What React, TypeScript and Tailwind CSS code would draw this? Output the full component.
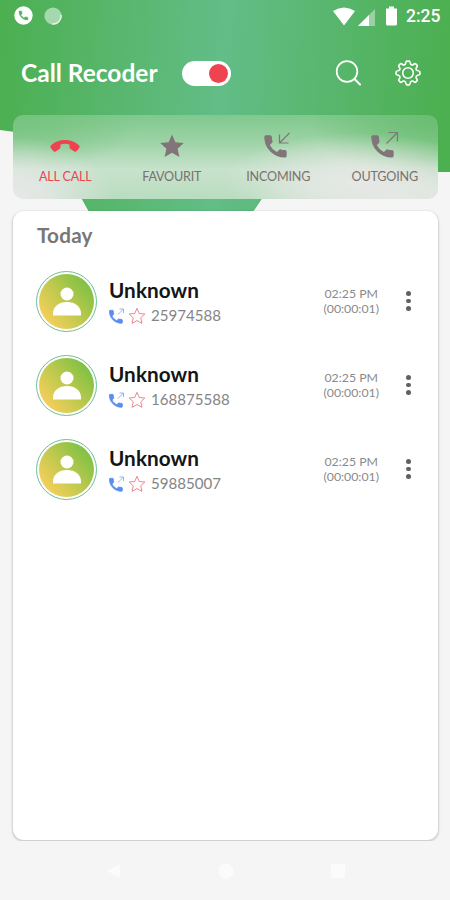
import type { ReactNode } from "react";

const HANDSET =
  "M6.62 10.79c1.44 2.83 3.76 5.14 6.59 6.59l2.2-2.2c.27-.27.67-.36 1.02-.24 1.12.37 2.33.57 3.57.57.55 0 1 .45 1 1V20c0 .55-.45 1-1 1C10.61 21 3 13.39 3 4c0-.55.45-1 1-1h3.5c.55 0 1 .45 1 1 0 1.25.2 2.45.57 3.57.11.35.03.74-.25 1.02l-2.2 2.2z";
const STAR =
  "M12 0.5l3.400 7.700 8.400 .8-6.200 5.700 1.800 8.300-7.400-4.200-7.400 4.200 1.800-8.300-6.200-5.700 8.400-.8z";

function Backdrop() {
  return (
    <svg className="absolute left-0 top-0 -z-10 h-[215px] w-[450px]" viewBox="0 0 450 215">
      <defs>
        <linearGradient id="sky" gradientUnits="userSpaceOnUse" x1="-5" y1="90" x2="445" y2="120">
          <stop offset="0" stopColor="#4caf50" />
          <stop offset="0.5" stopColor="#62bd87" />
          <stop offset="1" stopColor="#4caf50" />
        </linearGradient>
      </defs>
      <path d="M0 0H450V172H284Q276 176 270 187L253 212H89L68 174Q52 138 30 134L0 130Z" fill="url(#sky)" />
    </svg>
  );
}

function StatusBar() {
  return (
    <div className="flex h-8 items-center pl-3.5 pr-[9px] text-white">
      <svg className="mt-[-1px] size-[19px]" viewBox="0 0 19 19">
        <circle cx="9.5" cy="9.5" r="9.2" fill="#fff" />
        <path d={HANDSET} fill="#4fb05a" stroke="#4fb05a" transform="translate(3.6 3.6) scale(.49)" />
      </svg>
      <svg className="ml-[11px] mt-[-1px] size-[18px]" viewBox="0 0 18 18">
        <circle cx="9" cy="9" r="8.6" fill="#a6d8ad" />
        <path d="M17 8A8 8 0 0 1 8 17" fill="none" stroke="#e6f5e8" strokeWidth="1.5" />
      </svg>
      <svg className="ml-auto h-[19px] w-[43px]" viewBox="0 0 43 19">
        <path d="M0 4Q11-3 22 4L11 18.5Z" fill="#fff" />
        <path d="M25 19L42 2V19Z" fill="#fff" fillOpacity=".4" />
        <path d="M25 19L36 8V19Z" fill="#fff" />
      </svg>
      <svg className="ml-[10px] h-5 w-[11px]" viewBox="0 0 11 20">
        <path d="M3 0.5h5v2h3V18q0 1.5-1.5 1.5h-8Q0 19.500 0 18V2.500h3z" fill="#fff" />
      </svg>
      <span className="ml-[9px] mt-0.5 w-[35px] whitespace-nowrap font-[Roboto,sans-serif] text-[17.500px] font-medium leading-none">2:25</span>
    </div>
  );
}

function Header() {
  return (
    <header className="mt-[23px] flex h-9 items-center pl-[21px] pr-[29px] text-white">
      <h1 className="w-[161px] whitespace-nowrap text-[24.500px] font-bold leading-9">Call Recoder</h1>
      <div className="flex h-[25px] w-[49px] items-center justify-end rounded-full bg-white pr-[3px]">
        <span className="size-[19px] rounded-full bg-[#ef4350]" />
      </div>
      <svg className="ml-auto size-[26px]" viewBox="0 0 26 26" fill="none" stroke="#fff" strokeWidth="1.700" strokeLinecap="round">
        <circle cx="12" cy="11.500" r="10.300" />
        <path d="M19.500 19l5.500 5.500" strokeWidth="2" />
      </svg>
      <svg className="ml-[34px] size-[26px]" viewBox="0 0 24 24" fill="none" stroke="#fff" strokeWidth="1.500" strokeLinejoin="round">
        <circle cx="12" cy="12" r="4.900" />
        <path d="M9.700 3.500Q10.200 1 11 1h2q.8 0 1.300 2.500Q15 5 16.600 4.500q1.800-1.600 2.500-.9l1.300 1.300q.7.700-.9 2.500Q19 9 20.500 9.700 23 10.200 23 11v2q0 .8-2.500 1.300-1.500.7-1 2.300 1.600 1.800.9 2.500l-1.300 1.300q-.7.700-2.500-.9-1.600-.5-2.300 1Q13.800 23 13 23h-2q-.8 0-1.300-2.500-.7-1.500-2.300-1-1.800 1.600-2.500.9l-1.300-1.300q-.7-.7.900-2.500.5-1.600-1-2.300Q1 13.800 1 13v-2q0-.8 2.500-1.300Q5 9 4.500 7.400 2.900 5.600 3.600 4.900l1.300-1.300q.7-.7 2.500.9 1.600.5 2.300-1z" />
      </svg>
    </header>
  );
}

function CallArrow({ incoming }: { incoming?: boolean }) {
  return (
    <svg className="h-7 w-8" viewBox="0 0 32 28">
      <path d={HANDSET} fill="#81757a" stroke="#81757a" strokeWidth=".9" transform="translate(-.7 1.300) scale(1.180)" />
      <path
        d={incoming ? "M27.500 2L17.500 12M17.500 3.500V12H26.500" : "M17.500 12.500L28.500 1.500M19.500 1.500H28.500V10.500"}
        fill="none"
        stroke="#81757a"
        strokeWidth="1.200"
      />
    </svg>
  );
}

function Tab({ label, active, children }: { label: string; active?: boolean; children: ReactNode }) {
  return (
    <div className={`flex w-[106.600px] flex-col items-center ${active ? "text-[#ef4350]" : "text-[#79716f]"}`}>
      <div className="flex h-[34px] items-center">{children}</div>
      <span className="mt-[6px] whitespace-nowrap text-[12.600px] leading-[18px] tracking-[-0.200px]">{label}</span>
    </div>
  );
}

function Tabs() {
  return (
    <nav className="ml-[13px] mt-6 h-[84px] w-[425px] rounded-[10px] bg-[radial-gradient(ellipse_100px_62px_at_0px_84px,#e8e8e8_0%,#e8e8e8cc_35%,#e8e8e800_100%),radial-gradient(ellipse_135px_48px_at_345px_66px,#e6e8e5_0%,#e6e8e5b0_40%,#e6e8e500_100%),radial-gradient(ellipse_150px_40px_at_390px_84px,#e4e6e3_0%,#e4e6e3a0_45%,#e4e6e300_100%),radial-gradient(ellipse_130px_72px_at_425px_0px,#69bd70_0%,#69bd7090_50%,#69bd7000_100%),radial-gradient(ellipse_120px_56px_at_10px_0px,#75c37d_0%,#75c37d80_50%,#75c37d00_100%),linear-gradient(180deg,#80c88e_0%,#9bd2a4_30%,#c8e2cc_65%,#b8ddbf_100%)] pt-[13px]">
      <div className="-ml-px flex">
        <Tab label="ALL CALL" active>
          <svg className="mt-0.5 h-[14px] w-[30px]" viewBox="0 0 30 14">
            <path d="M.8 9Q-.2 7.500 1.300 6Q7 1 15 1t13.700 5q1.500 1.500.5 3l-2.500 3q-1.200 1.300-2.700.2L20.500 10q-1-.7-1-2V5.500q-4.500-1.300-9 0V8q0 1.300-1 2L6 12.200q-1.500 1.100-2.700-.2z" fill="#ef4350" />
          </svg>
        </Tab>
        <Tab label="FAVOURIT">
          <svg className="mt-0.5 size-6" viewBox="0 0 24 24"><path d={STAR} fill="#81757a" /></svg>
        </Tab>
        <Tab label="INCOMING"><CallArrow incoming /></Tab>
        <Tab label="OUTGOING"><CallArrow /></Tab>
      </div>
    </nav>
  );
}

function Avatar() {
  return (
    <div className="size-[61px] rounded-full border-[1.500px] border-[#6cc194] p-0.5">
      <div className="flex size-full items-center justify-center rounded-full bg-linear-[50deg] from-[#fbcf5c] from-10% via-[#bdc94d] via-50% to-[#77c043] to-90%">
        <svg className="h-[29px] w-7" viewBox="0 0 28 29" fill="#fff">
          <circle cx="14" cy="7" r="6.500" />
          <path d="M0 28.500V26.500C0 19.500 6 15 14 15s14 4.500 14 11.500v2z" />
        </svg>
      </div>
    </div>
  );
}

function CallRow({ phone }: { phone: string }) {
  return (
    <li className="flex h-[84px] items-center pl-6 pr-[27px]">
      <Avatar />
      <div className="ml-3 pt-[3px]">
        <p className="text-[20.700px] font-bold leading-[26px] tracking-[0.100px] text-[#151515]">Unknown</p>
        <div className="flex h-[26px] items-center">
          <svg className="size-4" viewBox="0 0 16 16">
            <path d={HANDSET} fill="#5b8def" stroke="#5b8def" strokeWidth="1.200" transform="translate(-1.800 .2) scale(.72)" />
            <path d="M9 6.500L14.500 1M10.500 1H14.500V5" fill="none" stroke="#86aaf0" strokeWidth=".9" />
          </svg>
          <svg className="ml-[4px] size-4" viewBox="0 0 24 24"><path d={STAR} fill="none" stroke="#ed7d88" strokeWidth="1.400" /></svg>
          <span className="ml-1.5 whitespace-nowrap text-[15.100px] text-[#858585]">{phone}</span>
        </div>
      </div>
      <div className="ml-auto mr-px text-center text-[12.300px] leading-[15px] text-[#8a8a8a]">
        <p>02:25 PM</p>
        <p>(00:00:01)</p>
      </div>
      <div className="ml-[26px] flex w-[5px] flex-col gap-[3px]">
        <span className="size-[4.500px] rounded-full bg-[#606060]" />
        <span className="size-[4.500px] rounded-full bg-[#606060]" />
        <span className="size-[4.500px] rounded-full bg-[#606060]" />
      </div>
    </li>
  );
}

export default function App() {
  return (
    <div className="relative isolate flex h-[900px] w-[450px] flex-col overflow-hidden bg-[#f5f5f5] font-[Lato,sans-serif]">
      <Backdrop />
      <StatusBar />
      <Header />
      <Tabs />
      <div className="h-[642px] overflow-hidden pt-3">
        <main className="ml-[13px] h-[629px] w-[425px] rounded-[11px] bg-white shadow-[0_1px_2px_1px_rgba(0,0,0,0.16)]">
          <h2 className="pl-6 pt-2.5 text-[20.700px] font-bold leading-7 tracking-[0.200px] text-[#777]">Today</h2>
          <ul className="-ml-px mt-[10px]">
            <CallRow phone="25974588" />
            <CallRow phone="168875588" />
            <CallRow phone="59885007" />
          </ul>
        </main>
      </div>
      <div className="flex h-[59px] items-center justify-between pl-[107px] pr-[104px]">
        <svg className="size-4" viewBox="0 0 16 16"><path d="M0 8L13 1V15Z" fill="#fbfbfb" /></svg>
        <svg className="size-4" viewBox="0 0 16 16"><circle cx="7" cy="8" r="7.500" fill="#fbfbfb" /></svg>
        <svg className="size-4" viewBox="0 0 16 16"><path d="M1 1H15V15H1Z" fill="#fbfbfb" /></svg>
      </div>
    </div>
  );
}
